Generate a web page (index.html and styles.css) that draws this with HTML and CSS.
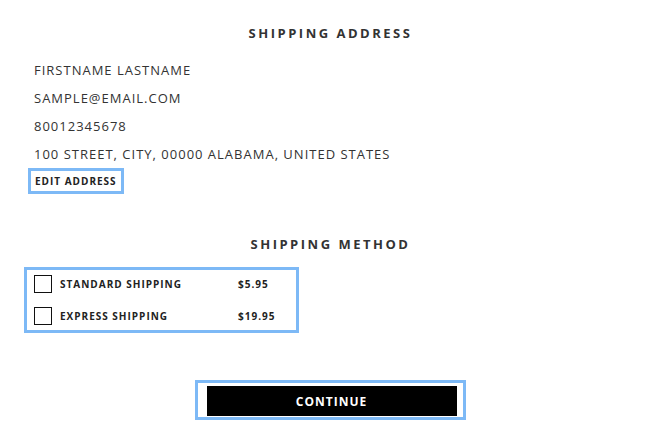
FILE: index.html
```html
<!DOCTYPE html>
<html>
<head>
<meta charset="utf-8">
<link rel="stylesheet" href="styles.css">
</head>
<body>
<main class="checkout">
  <section class="address">
    <h2 class="section-title">SHIPPING ADDRESS</h2>
    <div class="address-lines">
      <p>FIRSTNAME LASTNAME</p>
      <p>SAMPLE@EMAIL.COM</p>
      <p>80012345678</p>
      <p>100 STREET, CITY, 00000 ALABAMA, UNITED STATES</p>
    </div>
    <a class="edit-link" href="#">EDIT ADDRESS</a>
  </section>
  <section class="method">
    <h2 class="section-title method-title">SHIPPING METHOD</h2>
    <div class="method-box">
      <label class="option"><span class="check"></span><span class="name">STANDARD SHIPPING</span><span class="price">$5.95</span></label>
      <label class="option"><span class="check"></span><span class="name">EXPRESS SHIPPING</span><span class="price">$19.95</span></label>
    </div>
  </section>
  <div class="actions">
    <div class="continue-wrap"><button class="continue">CONTINUE</button></div>
  </div>
</main>
</body>
</html>
```
FILE: styles.css
```css
html, body {
  margin: 0;
  padding: 0;
  background: #fff;
}
body {
  font-family: "Open Sans", "Liberation Sans", sans-serif;
  color: #333;
}
.checkout {
  width: 660px;
  padding-top: 25px;
}
.section-title {
  margin: 0;
  text-align: center;
  font-size: 13px;
  font-weight: 700;
  line-height: 16px;
  letter-spacing: 2.5px;
  color: #333;
  padding-left: 1px;
}
.address-lines {
  margin-top: 15px;
  padding-left: 34px;
}
.address-lines p {
  margin: 0;
  font-size: 13px;
  line-height: 28px;
  letter-spacing: 1px;
  color: #333;
}
.edit-link {
  display: inline-block;
  margin: 0 0 0 28px;
  border: 3px solid #7db9f6;
  padding: 0 4px 0 4px;
  font-size: 10px;
  font-weight: 700;
  line-height: 20px;
  letter-spacing: 1px;
  color: #222;
  text-decoration: none;
}
.method-title {
  margin-top: 42px;
}
.method-box {
  margin: 15px 0 0 24px;
  border: 3px solid #7db9f6;
  padding: 5px 0 5px 7px;
  box-sizing: content-box;
  width: 262px;
  display: flex;
  flex-direction: column;
  gap: 14px;
}
.option {
  display: flex;
  align-items: center;
  height: 18px;
  font-size: 10px;
  font-weight: 700;
  letter-spacing: 1px;
  color: #222;
}
.check {
  width: 16px;
  height: 16px;
  border: 1px solid #111;
  margin-right: 8px;
  flex: none;
}
.name {
  width: 178px;
  flex: none;
}
.actions {
  margin-top: 47px;
  display: flex;
  justify-content: center;
}
.continue-wrap {
  border: 3px solid #7db9f6;
  padding: 3px 6px 1px 9px;
  display: flex;
}
.continue {
  width: 250px;
  height: 30px;
  border: 0;
  background: #000;
  color: #fff;
  font-family: "Open Sans", "Liberation Sans", sans-serif;
  font-size: 12px;
  font-weight: 700;
  letter-spacing: 1px;
  padding: 0;
}
```
